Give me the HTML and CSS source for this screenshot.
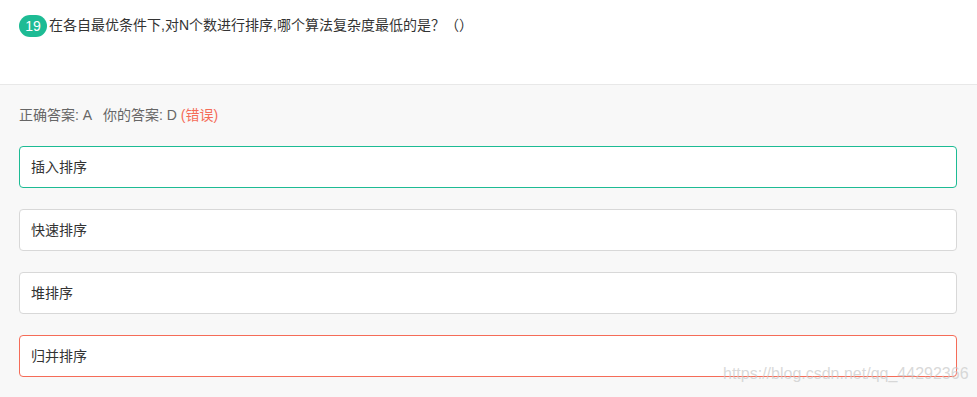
FILE: index.html
```html
<!DOCTYPE html>
<html lang="zh-CN">
<head>
    <meta charset="UTF-8">
    <title>题目 19</title>
    <link rel="stylesheet" href="styles.css">
</head>
<body>
    <div class="question">
        <span class="q-num">19</span><span class="q-text">在各自最优条件下,对N个数进行排序,哪个算法复杂度最低的是？（）</span>
    </div>

    <div class="answer-panel">
        <div class="answer-line">
            正确答案: A &nbsp; 你的答案: D <span class="wrong">(错误)</span>
        </div>
        <div class="options">
            <div class="option correct">插入排序</div>
            <div class="option">快速排序</div>
            <div class="option">堆排序</div>
            <div class="option selected-wrong">归并排序</div>
        </div>
        <div class="watermark">https://blog.csdn.net/qq_44292366</div>
    </div>
</body>
</html>
```

FILE: styles.css
```css
* {
    margin: 0;
    padding: 0;
    box-sizing: border-box;
}

body {
    font-family: "Liberation Sans", Arial, "Noto Sans CJK SC", sans-serif;
    font-size: 14px;
    color: #333;
    background: #f8f8f8;
    width: 977px;
    height: 397px;
    overflow: hidden;
}

.question {
    background: #fff;
    height: 85px;
    padding: 15px 0 0 19px;
    border-bottom: 1px solid #e8e8e8;
    display: flex;
    align-items: flex-start;
}

.q-num {
    display: inline-block;
    width: 28px;
    height: 22px;
    line-height: 22px;
    border-radius: 11px;
    background: #1dbb94;
    color: #fff;
    font-size: 14px;
    text-align: center;
    margin-right: 2px;
}

.q-text {
    line-height: 20px;
    color: #333;
}

.answer-panel {
    position: relative;
    padding: 21px 20px 0 19px;
}

.answer-line {
    color: #666;
    line-height: 18px;
    height: 18px;
}

.wrong {
    color: #f56c58;
}

.options {
    margin-top: 22px;
    display: flex;
    flex-direction: column;
    gap: 21px;
}

.option {
    height: 42px;
    line-height: 40px;
    padding-left: 11px;
    background: #fff;
    border: 1px solid #d8d8d8;
    border-radius: 4px;
    color: #333;
}

.option.correct {
    border-color: #1dbb94;
}

.option.selected-wrong {
    border-color: #f56c58;
}

.watermark {
    position: absolute;
    left: 723px;
    top: 280px;
    font-size: 16px;
    color: rgba(200, 200, 200, 0.7);
    white-space: nowrap;
}
```
